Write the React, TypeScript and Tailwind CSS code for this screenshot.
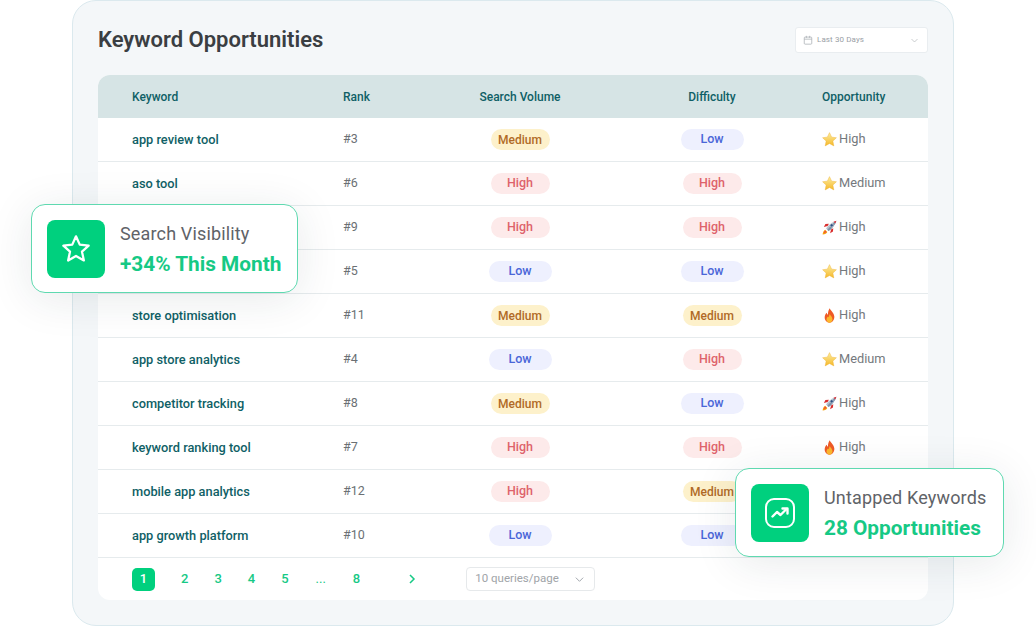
import React from "react";

type Level = "Low" | "Medium" | "High";
type Icon = "star" | "rocket" | "fire";

const rows: { k: string; r: string; v: Level; d: Level; i: Icon; o: string }[] = [
  { k: "app review tool", r: "#3", v: "Medium", d: "Low", i: "star", o: "High" },
  { k: "aso tool", r: "#6", v: "High", d: "High", i: "star", o: "Medium" },
  { k: "app ranking tool", r: "#9", v: "High", d: "High", i: "rocket", o: "High" },
  { k: "app keywords", r: "#5", v: "Low", d: "Low", i: "star", o: "High" },
  { k: "store optimisation", r: "#11", v: "Medium", d: "Medium", i: "fire", o: "High" },
  { k: "app store analytics", r: "#4", v: "Low", d: "High", i: "star", o: "Medium" },
  { k: "competitor tracking", r: "#8", v: "Medium", d: "Low", i: "rocket", o: "High" },
  { k: "keyword ranking tool", r: "#7", v: "High", d: "High", i: "fire", o: "High" },
  { k: "mobile app analytics", r: "#12", v: "High", d: "Medium", i: "star", o: "High" },
  { k: "app growth platform", r: "#10", v: "Low", d: "Low", i: "star", o: "High" },
];

function Badge({ level }: { level: Level }) {
  if (level === "Low")
    return <span className="flex h-[21px] w-[63px] items-center justify-center rounded-full bg-[#eef0fe] text-[12.500px] font-medium text-[#4a66d8]">Low</span>;
  if (level === "High")
    return <span className="flex h-[21px] w-[59px] items-center justify-center rounded-full bg-[#fdeaea] text-[12.500px] font-medium text-[#de636b]">High</span>;
  return <span className="flex h-[21px] w-[59px] items-center justify-center rounded-full bg-[#fdf1cb] text-[12px] font-medium text-[#b06a26]">Medium</span>;
}

function Emoji({ kind }: { kind: Icon }) {
  if (kind === "star")
    return (
      <svg viewBox="0 0 24 24" className="h-[15px] w-[15px]">
        <defs>
          <linearGradient id="st" x1="0" y1="0" x2="0" y2="1">
            <stop offset="0" stopColor="#fdeea0" />
            <stop offset="1" stopColor="#f5b82a" />
          </linearGradient>
        </defs>
        <path d="M12 1l3.400 7.200 7.600 1-5.600 5.300 1.500 7.700L12 18.400l-6.900 3.800 1.500-7.700L1 9.200l7.600-1z" fill="url(#st)" stroke="#eeb02e" strokeWidth="0.700" strokeLinejoin="round" />
      </svg>
    );
  if (kind === "rocket")
    return (
      <svg viewBox="0 0 24 24" className="h-[15px] w-[15px]">
        <path d="M1 23c.5-4 1.800-6.500 4-7.500l3.500 3.500C7.500 21.200 5 22.500 1 23z" fill="#f59e0b" />
        <path d="M3 21c.3-2 1.100-3.300 2.500-3.900l1.400 1.400C6.300 19.900 5 20.700 3 21z" fill="#ef4444" />
        <path d="M9 9.500l-6 1.500 2.500-4.500 5.500-.5z" fill="#d92d2d" />
        <path d="M14.500 15l-1.500 6 4.500-2.500.5-5.500z" fill="#d92d2d" />
        <path d="M6.500 13.500C10 8 15.500 3.500 23 1c-2.500 7.500-7 13-12.500 16.500z" fill="#b4c2ce" />
        <path d="M8.500 15.500C12 11 17 6 23 1c-2.500 7.500-7 13-12.500 16.500z" fill="#7e93a8" />
        <circle cx="15.500" cy="8.500" r="2.500" fill="#2f4f7f" stroke="#dfe7ee" strokeWidth="0.800" />
        <path d="M18.300 2.700L23 1l-1.700 4.700z" fill="#d9363e" />
      </svg>
    );
  return (
    <svg viewBox="0 0 24 24" className="h-[15px] w-[15px]">
      <path d="M12.500 .5c1 4 6.500 6.500 7.200 13 .4 5.200-3.500 10-7.700 10s-8-3.800-7.700-9c.2-3 1.700-5.200 3.200-6.800.3 1.500 1 2.600 2 3.100C9.500 6.800 10.500 3 12.500 .5z" fill="#ee5a26" />
      <path d="M12.500 9.500c.6 2.800 4.300 4.400 4.300 8.500 0 3-2.300 5.500-4.800 5.500S7.200 21.300 7.200 18.300c0-2.500 1.600-3.800 2.600-5.200.3.900.7 1.400 1.300 1.600 0-1.900.4-3.600 1.400-5.200z" fill="#fcb82e" />
    </svg>
  );
}

function Card({ title, value, icon, className }: { title: string; value: string; icon: React.ReactNode; className: string }) {
  return (
    <div className={`absolute flex h-[89px] items-center rounded-[14px] border border-[#5fd9b0] bg-white pl-[15px] shadow-[0_6px_44px_rgba(30,50,60,0.10)] ${className}`}>
      <div className="flex h-[58px] w-[58px] shrink-0 items-center justify-center rounded-[8px] bg-[#00d07e]">{icon}</div>
      <div className="ml-[15px] flex flex-col">
        <span className="mt-[1px] text-[18px] leading-[26px] tracking-[0.15px] text-[#5f6368]">{title}</span>
        <span className="mt-[3px] text-[20.800px] font-bold leading-[28px] text-[#16c985]">{value}</span>
      </div>
    </div>
  );
}

export default function App() {
  return (
    <div className="relative h-[627px] w-[1036px] overflow-hidden bg-white font-['Roboto',sans-serif]">
      <div className="mx-[72px] h-[626px] w-[882px] rounded-[24px] border border-[#dbe9ee] bg-[#f4f7f9] px-[25px]">
        <div className="flex h-[74px] items-start justify-between">
          <h1 className="mt-[24px] text-[22px] font-semibold leading-[30px] text-[#3a3e42]">Keyword Opportunities</h1>
          <div className="mt-[26px] flex h-[26px] w-[133px] items-center rounded-[3px] border border-[#e9edf0] bg-white pl-[7px] text-[#9aa0a6]">
            <svg viewBox="0 0 24 24" className="h-[10px] w-[10px]" fill="none" stroke="#a8adb2" strokeWidth="1.800">
              <rect x="3" y="5" width="18" height="17" rx="2" />
              <path d="M3 10h18M8 2v5M16 2v5" />
            </svg>
            <span className="ml-[4px] text-[8px] tracking-[0.1px]">Last 30 Days</span>
            <svg viewBox="0 0 24 24" className="ml-auto mr-[8px] h-[9px] w-[9px]" fill="none" stroke="#b0b4b8" strokeWidth="1.800">
              <path d="M4 8l8 8 8-8" />
            </svg>
          </div>
        </div>

        <div className="w-[830px] overflow-hidden rounded-[12px] bg-white">
          <div className="grid h-[43px] grid-cols-[245px_85px_184px_200px_1fr] items-center bg-[#d6e4e5] pt-[1px] text-[12px] font-medium text-[#0f5f66]">
            <span className="pl-[34px]">Keyword</span>
            <span>Rank</span>
            <span className="text-center">Search Volume</span>
            <span className="text-center">Difficulty</span>
            <span className="pl-[10px]">Opportunity</span>
          </div>
          {rows.map((row) => (
            <div key={row.k} className="grid h-[44px] grid-cols-[245px_85px_184px_200px_1fr] items-center border-b border-[#e6ebed]">
              <span className="pl-[34px] text-[12.800px] font-medium text-[#0f5f66]">{row.k}</span>
              <span className="text-[12.500px] text-[#6b7074]">{row.r}</span>
              <span className="flex justify-center"><Badge level={row.v} /></span>
              <span className="flex justify-center"><Badge level={row.d} /></span>
              <span className="flex items-center gap-[2px] pb-[1px] pl-[10px] text-[12.800px] text-[#74797d]">
                <Emoji kind={row.i} />
                {row.o}
              </span>
            </div>
          ))}
          <div className="flex h-[42px] items-center pl-[34px] text-[13px] font-medium text-[#16c985]">
            <span className="flex h-[23px] w-[23px] items-center justify-center rounded-[5px] bg-[#00d07e] text-white">1</span>
            <span className="ml-[26px]">2</span>
            <span className="ml-[26px]">3</span>
            <span className="ml-[26px]">4</span>
            <span className="ml-[26px]">5</span>
            <span className="ml-[27px] font-normal">...</span>
            <span className="ml-[27px]">8</span>
            <svg viewBox="0 0 24 24" className="ml-[46px] h-[12px] w-[12px]" fill="none" stroke="#16c985" strokeWidth="3">
              <path d="M8 4l8 8-8 8" />
            </svg>
            <div className="ml-[48px] flex h-[24px] w-[129px] items-center justify-between rounded-[4px] border border-[#e6e9eb] px-[8px] text-[11.500px] font-normal text-[#a0a4a8]">
              <span>10 queries/page</span>
              <svg viewBox="0 0 24 24" className="mr-[1px] h-[11px] w-[11px]" fill="none" stroke="#9aa0a6" strokeWidth="2">
                <path d="M4 8l8 8 8-8" />
              </svg>
            </div>
          </div>
        </div>
      </div>

      <Card
        className="left-[31px] top-[204px] w-[267px]"
        title="Search Visibility"
        value="+34% This Month"
        icon={
          <svg viewBox="0 0 24 24" className="h-[32px] w-[32px]" fill="none" stroke="white" strokeWidth="1.700" strokeLinejoin="round">
            <path d="M12 2.500l2.800 6.200 6.700.8-5 4.500 1.400 6.600L12 17.200l-5.900 3.400 1.400-6.600-5-4.500 6.700-.8z" />
          </svg>
        }
      />
      <Card
        className="left-[735px] top-[468px] w-[269px]"
        title="Untapped Keywords"
        value="28 Opportunities"
        icon={
          <svg viewBox="0 0 32 32" className="h-[32px] w-[32px]" fill="none" stroke="white" strokeWidth="2" strokeLinejoin="round" strokeLinecap="round">
            <rect x="2" y="2" width="28" height="28" rx="8" />
            <path d="M8.500 19.500l4.500-4.500 3.500 3 6-6" strokeWidth="2.400" />
            <path d="M18.500 11.500h5v5" strokeWidth="2.400" />
          </svg>
        }
      />
    </div>
  );
}
